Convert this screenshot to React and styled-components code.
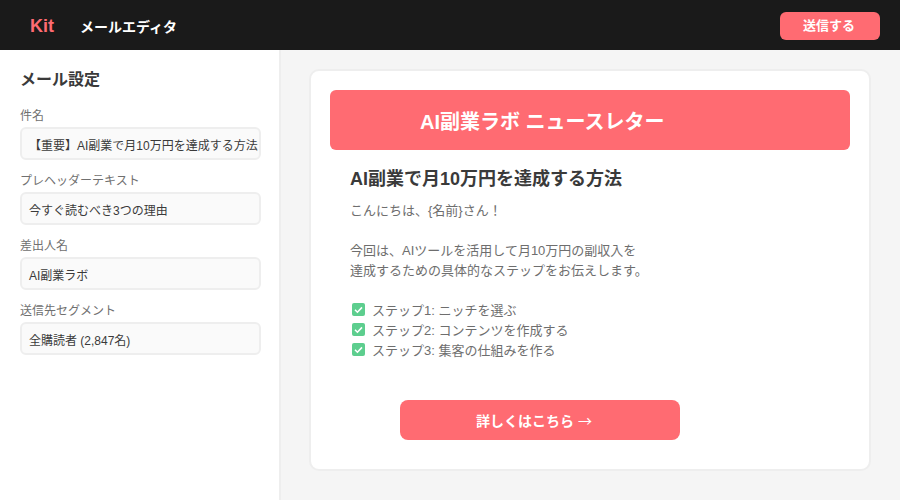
import React from "react";
import styled, { createGlobalStyle } from "styled-components";

const Global = createGlobalStyle`
  html, body { margin: 0; padding: 0; height: 100%; background: #fff; }
  #root { height: 100%; }
  * { box-sizing: border-box; }
  body { font-family: "Liberation Sans", Arial, "Noto Sans CJK JP", sans-serif; }
`;
const Page = styled.div`
  width: 900px; height: 500px; display: flex; flex-direction: column; overflow: hidden;
`;
const Header = styled.header`
  height: 50px; flex: none; background: #1a1a1a; display: flex; align-items: center;
  padding: 2px 20px 0 30px;
`;
const Logo = styled.div`
  font-size: 18px; font-weight: 700; color: #ff6b72; width: 50px;
`;
const HeaderTitle = styled.div`
  font-size: 14px; font-weight: 700; color: #fff;
`;
const SendButton = styled.button`
  margin-left: auto; width: 100px; height: 28px; border: 0; border-radius: 6px; padding: 0 2px 3px 0;
  background: #ff6b72; color: #fff; font: 700 13px "Liberation Sans", "Noto Sans CJK JP", sans-serif;
`;
const Body = styled.div`
  flex: 1; display: flex; min-height: 0;
`;
const Sidebar = styled.aside`
  width: 281px; flex: none; background: #fff; border-right: 2px solid #eee; padding: 20px;
`;
const SideTitle = styled.h2`
  margin: 0 0 19px; font-size: 16px; line-height: 20px; font-weight: 700; color: #3a3a3a;
`;
const Field = styled.div`
  margin-bottom: 14px;
`;
const Label = styled.div`
  font-size: 12px; line-height: 14px; color: #707070; margin-bottom: 4px;
`;
const InputBox = styled.div`
  width: 241px; height: 33px; padding: 2px 7px 0; display: flex; align-items: center;
  border: 2px solid #eee; border-radius: 6px; background: #fafafa;
  font-size: 12px; color: #3a3a3a; white-space: nowrap; overflow: hidden;
`;
const Main = styled.main`
  flex: 1; background: #f5f5f5; padding: 19px 28px;
`;
const Card = styled.section`
  width: 562px; height: 402px; background: #fff; border: 2px solid #eee; border-radius: 10px;
  padding: 19px;
`;
const Banner = styled.div`
  height: 60px; background: #ff6b72; border-radius: 6px; display: flex; align-items: center;
  padding-left: 90px; color: #fff; font-size: 20px; font-weight: 700;
`;
const Content = styled.div`
  padding: 17px 20px 0;
`;
const MailTitle = styled.h1`
  margin: 0 0 10px; font-size: 18px; line-height: 24px; font-weight: 700; color: #3a3a3a;
`;
const Para = styled.p`
  margin: 0 0 ${(p) => p.$gap}px; font-size: 13px; line-height: 20px; color: #6e6e6e;
`;
const Steps = styled.ul`
  margin: 0; padding: 0 0 0 2px; list-style: none;
`;
const Step = styled.li`
  display: flex; align-items: center; gap: 7px; height: 20px; font-size: 13px; color: #6e6e6e;
`;
const CheckIcon = styled.svg`
  flex: none; width: 13px; height: 13px;
`;
const Cta = styled.div`
  width: 280px; height: 40px; margin: 41px 0 0 70px; padding-right: 12px; border-radius: 8px; background: #ff6b72;
  color: #fff; font-size: 14px; font-weight: 700; display: flex; align-items: center; justify-content: center;
  white-space: pre;
`;
const Arrow = styled.span`
  font-family: "Noto Sans CJK JP", sans-serif; font-weight: 400;
`;

const Check = () => (
  <CheckIcon viewBox="0 0 13 13">
    <rect width="13" height="13" rx="2" fill="#5dce8e" />
    <path d="M3 6.8 5.4 9.2 10 4.4" fill="none" stroke="#fff" strokeWidth="1.6" />
  </CheckIcon>
);

const fields = [
  ["件名", "【重要】AI副業で月10万円を達成する方法"],
  ["プレヘッダーテキスト", "今すぐ読むべき3つの理由"],
  ["差出人名", "AI副業ラボ"],
  ["送信先セグメント", "全購読者 (2,847名)"],
];
const steps = ["ステップ1: ニッチを選ぶ", "ステップ2: コンテンツを作成する", "ステップ3: 集客の仕組みを作る"];

export default function App() {
  return (
    <Page>
      <Global />
      <Header>
        <Logo>Kit</Logo>
        <HeaderTitle>メールエディタ</HeaderTitle>
        <SendButton>送信する</SendButton>
      </Header>
      <Body>
        <Sidebar>
          <SideTitle>メール設定</SideTitle>
          {fields.map(([l, v]) => (
            <Field key={l}>
              <Label>{l}</Label>
              <InputBox>{v}</InputBox>
            </Field>
          ))}
        </Sidebar>
        <Main>
          <Card>
            <Banner>AI副業ラボ ニュースレター</Banner>
            <Content>
              <MailTitle>AI副業で月10万円を達成する方法</MailTitle>
              <Para $gap={20}>こんにちは、&#123;名前&#125;さん！</Para>
              <Para $gap={18}>今回は、AIツールを活用して月10万円の副収入を<br />達成するための具体的なステップをお伝えします。</Para>
              <Steps>
                {steps.map((s) => (
                  <Step key={s}><Check />{s}</Step>
                ))}
              </Steps>
            </Content>
            <Cta>詳しくはこちら <Arrow>→</Arrow></Cta>
          </Card>
        </Main>
      </Body>
    </Page>
  );
}
